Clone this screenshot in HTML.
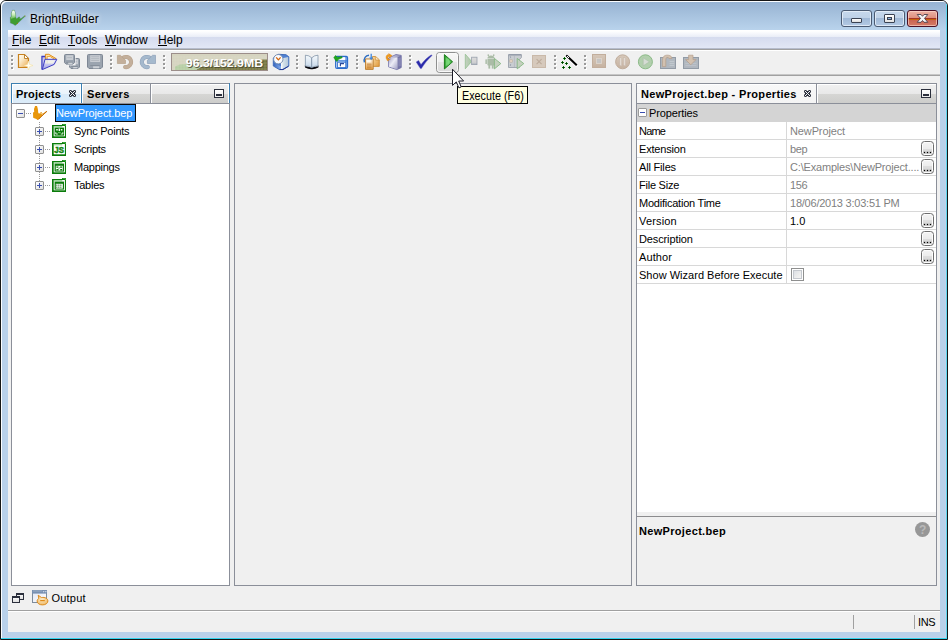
<!DOCTYPE html>
<html>
<head>
<meta charset="utf-8">
<title>BrightBuilder</title>
<style>
html,body{margin:0;padding:0;}
body{width:948px;height:640px;overflow:hidden;position:relative;background:#ffffff;font-family:"Liberation Sans",sans-serif;font-size:11px;color:#000;}
.a{position:absolute;}
.t{position:absolute;white-space:nowrap;line-height:1;}
/* window frame */
#frame{left:0;top:0;width:946px;height:638px;border:1px solid #161616;border-radius:6px 6px 0 0;background:linear-gradient(#97b3d2 0px,#97b3d2 1px,#b9d3ec 29px,#b9d1ea 30px);}
#titlegrad{display:none;}
#client{left:8px;top:30px;width:932px;height:602px;background:#f0f0f0;}
/* menu */
#menubar{left:8px;top:30px;width:932px;height:18px;background:linear-gradient(#ffffff 0px,#ffffff 1px,#e9edf7 7px,#d5dbee 7px,#e2e7f5 18px);}
.menu{font-size:12px;top:34px;}
.menu u{text-decoration:none;display:inline-block;height:12px;background:linear-gradient(#000,#000) no-repeat 0 11px / 100% 1px;}
/* panels */
.tabtxt{font-weight:bold;font-size:11px;}
.grip i{position:absolute;left:0;width:2px;height:2px;background:#a0a0a0;box-shadow:1px 1px 0 #fff;}

.xb{width:7px;height:7px;border:1px solid #919191;background:linear-gradient(135deg,#fff,#e0e0e0);border-radius:1px;}
.xb .h{position:absolute;left:1px;top:3px;width:5px;height:1px;background:#3a4fb0;}
.xb .v{position:absolute;left:3px;top:1px;width:1px;height:5px;background:#3a4fb0;}
.prow{position:absolute;left:637px;width:299px;height:1px;background:#d8d8d8;}
.pn{position:absolute;white-space:nowrap;line-height:1;left:639px;font-size:11px;}
.pv{position:absolute;white-space:nowrap;line-height:1;left:790px;font-size:11px;color:#7f7f7f;}
.eb{position:absolute;left:921px;width:11px;height:13px;border:1px solid #6e6e6e;border-radius:3.5px;background:linear-gradient(#f4f4f4,#ececec 50%,#dedede 50%,#d0d0d0);box-shadow:inset 0 0 0 1px #fcfcfc;}
.eb i{position:absolute;top:10px;width:1px;height:1px;background:#000;box-shadow:0 0 0 0.3px rgba(0,0,0,0.5);}

.wb{width:29px;height:15px;border:1px solid #4a5a72;border-radius:3px;background:linear-gradient(#c6d8ec 0,#bfd2e8 7px,#9fb8d6 7px,#b4cae4 15px);box-shadow:inset 0 0 0 1px rgba(232,241,250,0.8);}
.wc{border-color:#4c1024;background:linear-gradient(#ecb2a4 0,#de907e 7px,#a63424 7px,#a63424 8px,#c4640c 8px,#c4640c 9px,#ca6452 9px,#d47a66 15px);box-shadow:inset 0 0 0 1px rgba(255,222,212,0.6);}
</style>
</head>
<body>
<div class="a" id="frame"></div>
<div class="a" id="titlegrad"></div>
<!-- outer borders -->
<div class="a" style="left:1px;top:1px;width:946px;height:637px;border-radius:5px 5px 0 0;box-shadow:inset 1px 1px 0 #fbfdff;"></div>
<div class="a" style="left:946px;top:4px;width:1px;height:635px;background:#5fd8f0"></div>
<div class="a" style="left:1px;top:638px;width:946px;height:1px;background:#30d4ee"></div>
<div class="a" style="left:2px;top:637px;width:944px;height:1px;background:#c6d0e8"></div>
<div class="a" style="left:945px;top:30px;width:1px;height:607px;background:#c2d2ea"></div>
<div class="t" id="title" style="left:30px;top:13px;font-size:12px;text-shadow:0 0 5px rgba(255,255,255,0.9),0 0 8px rgba(255,255,255,0.6);">BrightBuilder</div>


<!-- app icon -->
<svg class="a" style="left:9px;top:9px" width="18" height="18" viewBox="0 0 16.36 16.36"><defs><linearGradient id="gThumb" x1="0" y1="0" x2="0" y2="1"><stop offset="0" stop-color="#ffffff"/><stop offset="0.5" stop-color="#c4ecb4"/><stop offset="1" stop-color="#52aa40"/></linearGradient></defs>
<path d="M3,1 L5,1 L5.6,3 L6,5 L6.2,7.5 L7,8.8 L8,8 L9,7 L10,7.4 L9.6,8.6 L11,8.6 L14.4,6 L15,6.4 L12,9.2 L9,12 L6.4,14.6 L5.4,15 L4.4,14 L3,13.4 L1.2,12.8 L1,7.4 L2.2,7 L2,4 L2.6,2.6 Z" fill="#3f9d30" stroke="#5c7c8c" stroke-width="0.5" stroke-opacity="0.55"/>
<path d="M3.1,1.3 L4.9,1.3 L5.4,3 L5.8,5 L6,7.6 L1.6,9.4 L1.4,7.6 L2.5,7.1 L2.3,4 L2.8,2.7 Z" fill="url(#gThumb)"/>
<rect x="7.2" y="12.6" width="0.9" height="0.9" fill="#b86a10"/><rect x="14" y="6" width="0.9" height="0.9" fill="#c8a040" opacity="0.8"/></svg>
<!-- window buttons -->
<div class="a wb" style="left:841px;top:10px;"></div>
<div class="a wb" style="left:874px;top:10px;"></div>
<div class="a wb wc" style="left:907px;top:10px;"></div>
<div class="a" style="left:851px;top:18px;width:9px;height:3px;border:1px solid #3a4252;border-radius:1px;background:linear-gradient(#ffffff,#dcdcdc)"></div>
<div class="a" style="left:884px;top:14px;width:9px;height:7px;border:1px solid #3a4252;border-radius:1px;background:linear-gradient(#ffffff,#e2e2e2)"></div>
<div class="a" style="left:887px;top:17px;width:3px;height:1px;border:1px solid #3a4252;background:#8eb4e0"></div>
<svg class="a" style="left:915px;top:12px" width="15" height="12" viewBox="915 12 15 12"><path d="M917.2,14.5 H921 L922.5,16.3 L924,14.5 H927.8 L924.5,18.4 L927.8,22.3 H924 L922.5,20.5 L921,22.3 H917.2 L920.5,18.4 Z" fill="#f6f6f6" stroke="#4a3e4c" stroke-width="0.9" stroke-linejoin="round"/></svg>
<div class="a" id="client"></div>
<div class="a" id="menubar"></div>
<div class="a" style="left:8px;top:48px;width:932px;height:1px;background:#b6bccc"></div>
<div class="a" style="left:8px;top:49px;width:932px;height:1px;background:#a0a0a0"></div>
<div class="a" style="left:8px;top:50px;width:932px;height:1px;background:#ffffff"></div>
<div class="a" style="left:8px;top:74px;width:932px;height:1px;background:#c6c6c6"></div>
<div class="a" style="left:8px;top:75px;width:932px;height:1px;background:#a0a0a0"></div>

<div class="t menu" id="m1" style="left:12px"><u>F</u>ile</div>
<div class="t menu" id="m2" style="left:39px"><u>E</u>dit</div>
<div class="t menu" id="m3" style="left:68px"><u>T</u>ools</div>
<div class="t menu" id="m4" style="left:105px"><u>W</u>indow</div>
<div class="t menu" id="m5" style="left:158px"><u>H</u>elp</div>

<svg class="a" id="tbsvg" style="left:0;top:0" width="948" height="110" viewBox="0 0 948 110">
<defs>
<linearGradient id="gNew" x1="0" y1="0" x2="1" y2="1"><stop offset="0" stop-color="#ffffff"/><stop offset="0.35" stop-color="#fbeccc"/><stop offset="0.7" stop-color="#f2c888"/><stop offset="1" stop-color="#f09a34"/></linearGradient>
<linearGradient id="gFold" x1="0" y1="0" x2="0" y2="1"><stop offset="0" stop-color="#e8e8fa"/><stop offset="1" stop-color="#a4a4e4"/></linearGradient>
<linearGradient id="gBook" x1="0" y1="0" x2="0" y2="1"><stop offset="0" stop-color="#f6fafd"/><stop offset="1" stop-color="#c4d6e8"/></linearGradient>
<linearGradient id="gBtn" x1="0" y1="0" x2="0" y2="1"><stop offset="0" stop-color="#f7f7f7"/><stop offset="0.48" stop-color="#f0f0f0"/><stop offset="0.5" stop-color="#e3e3e3"/><stop offset="1" stop-color="#dadada"/></linearGradient>
<linearGradient id="gPlay" x1="0" y1="0" x2="1" y2="0"><stop offset="0" stop-color="#158a15"/><stop offset="0.5" stop-color="#6fd06f"/><stop offset="1" stop-color="#2a9a2a"/></linearGradient>
<linearGradient id="gSrv" x1="0" y1="0" x2="1" y2="0"><stop offset="0" stop-color="#dcdcec"/><stop offset="1" stop-color="#8c8cb4"/></linearGradient>
<linearGradient id="gSrvF" x1="0" y1="0" x2="1" y2="1"><stop offset="0" stop-color="#a4a4c8"/><stop offset="0.45" stop-color="#ececf6"/><stop offset="1" stop-color="#a0a0c4"/></linearGradient>
<linearGradient id="gPaste2" x1="0" y1="0" x2="0" y2="1"><stop offset="0" stop-color="#fdf0dc"/><stop offset="1" stop-color="#e8a044"/></linearGradient>
<linearGradient id="gGcR" x1="0" y1="0" x2="1" y2="0"><stop offset="0" stop-color="#ffffff"/><stop offset="0.35" stop-color="#d4e0e8"/><stop offset="1" stop-color="#b4c8dc"/></linearGradient>
<linearGradient id="gGcL" x1="0" y1="0" x2="1" y2="0"><stop offset="0" stop-color="#3a68c0"/><stop offset="1" stop-color="#8ab0ec"/></linearGradient>
<linearGradient id="gTan" x1="0" y1="0" x2="0" y2="1"><stop offset="0" stop-color="#d6c8ba"/><stop offset="1" stop-color="#c6b2a0"/></linearGradient>
<linearGradient id="gDisTri" x1="0" y1="0" x2="1" y2="0"><stop offset="0" stop-color="#c4d0c0"/><stop offset="1" stop-color="#a8c8a4"/></linearGradient>
<linearGradient id="gDisSq" x1="0" y1="0" x2="0" y2="1"><stop offset="0" stop-color="#dcdcdc"/><stop offset="0.7" stop-color="#d0d0d2"/><stop offset="1" stop-color="#a8b0bc"/></linearGradient>
<linearGradient id="gGc" x1="0" y1="0" x2="1" y2="1"><stop offset="0" stop-color="#e4eefa"/><stop offset="0.6" stop-color="#8ab0e0"/><stop offset="1" stop-color="#3c6cb4"/></linearGradient>
<linearGradient id="gPaste" x1="0" y1="0" x2="1" y2="1"><stop offset="0" stop-color="#f8dca8"/><stop offset="1" stop-color="#e09838"/></linearGradient>
</defs>
<g id="grips">
<rect x="12" y="56" width="2" height="2" fill="#ffffff"/><rect x="11" y="55" width="2" height="2" fill="#9a9a9a"/><rect x="12" y="60" width="2" height="2" fill="#ffffff"/><rect x="11" y="59" width="2" height="2" fill="#9a9a9a"/><rect x="12" y="64" width="2" height="2" fill="#ffffff"/><rect x="11" y="63" width="2" height="2" fill="#9a9a9a"/><rect x="12" y="68" width="2" height="2" fill="#ffffff"/><rect x="11" y="67" width="2" height="2" fill="#9a9a9a"/>
<rect x="111" y="56" width="2" height="2" fill="#ffffff"/><rect x="110" y="55" width="2" height="2" fill="#9a9a9a"/><rect x="111" y="60" width="2" height="2" fill="#ffffff"/><rect x="110" y="59" width="2" height="2" fill="#9a9a9a"/><rect x="111" y="64" width="2" height="2" fill="#ffffff"/><rect x="110" y="63" width="2" height="2" fill="#9a9a9a"/><rect x="111" y="68" width="2" height="2" fill="#ffffff"/><rect x="110" y="67" width="2" height="2" fill="#9a9a9a"/>
<rect x="164" y="56" width="2" height="2" fill="#ffffff"/><rect x="163" y="55" width="2" height="2" fill="#9a9a9a"/><rect x="164" y="60" width="2" height="2" fill="#ffffff"/><rect x="163" y="59" width="2" height="2" fill="#9a9a9a"/><rect x="164" y="64" width="2" height="2" fill="#ffffff"/><rect x="163" y="63" width="2" height="2" fill="#9a9a9a"/><rect x="164" y="68" width="2" height="2" fill="#ffffff"/><rect x="163" y="67" width="2" height="2" fill="#9a9a9a"/>
<rect x="297" y="56" width="2" height="2" fill="#ffffff"/><rect x="296" y="55" width="2" height="2" fill="#9a9a9a"/><rect x="297" y="60" width="2" height="2" fill="#ffffff"/><rect x="296" y="59" width="2" height="2" fill="#9a9a9a"/><rect x="297" y="64" width="2" height="2" fill="#ffffff"/><rect x="296" y="63" width="2" height="2" fill="#9a9a9a"/><rect x="297" y="68" width="2" height="2" fill="#ffffff"/><rect x="296" y="67" width="2" height="2" fill="#9a9a9a"/>
<rect x="327" y="56" width="2" height="2" fill="#ffffff"/><rect x="326" y="55" width="2" height="2" fill="#9a9a9a"/><rect x="327" y="60" width="2" height="2" fill="#ffffff"/><rect x="326" y="59" width="2" height="2" fill="#9a9a9a"/><rect x="327" y="64" width="2" height="2" fill="#ffffff"/><rect x="326" y="63" width="2" height="2" fill="#9a9a9a"/><rect x="327" y="68" width="2" height="2" fill="#ffffff"/><rect x="326" y="67" width="2" height="2" fill="#9a9a9a"/>
<rect x="357" y="56" width="2" height="2" fill="#ffffff"/><rect x="356" y="55" width="2" height="2" fill="#9a9a9a"/><rect x="357" y="60" width="2" height="2" fill="#ffffff"/><rect x="356" y="59" width="2" height="2" fill="#9a9a9a"/><rect x="357" y="64" width="2" height="2" fill="#ffffff"/><rect x="356" y="63" width="2" height="2" fill="#9a9a9a"/><rect x="357" y="68" width="2" height="2" fill="#ffffff"/><rect x="356" y="67" width="2" height="2" fill="#9a9a9a"/>
<rect x="410" y="56" width="2" height="2" fill="#ffffff"/><rect x="409" y="55" width="2" height="2" fill="#9a9a9a"/><rect x="410" y="60" width="2" height="2" fill="#ffffff"/><rect x="409" y="59" width="2" height="2" fill="#9a9a9a"/><rect x="410" y="64" width="2" height="2" fill="#ffffff"/><rect x="409" y="63" width="2" height="2" fill="#9a9a9a"/><rect x="410" y="68" width="2" height="2" fill="#ffffff"/><rect x="409" y="67" width="2" height="2" fill="#9a9a9a"/>
<rect x="555" y="56" width="2" height="2" fill="#ffffff"/><rect x="554" y="55" width="2" height="2" fill="#9a9a9a"/><rect x="555" y="60" width="2" height="2" fill="#ffffff"/><rect x="554" y="59" width="2" height="2" fill="#9a9a9a"/><rect x="555" y="64" width="2" height="2" fill="#ffffff"/><rect x="554" y="63" width="2" height="2" fill="#9a9a9a"/><rect x="555" y="68" width="2" height="2" fill="#ffffff"/><rect x="554" y="67" width="2" height="2" fill="#9a9a9a"/>
<rect x="585" y="56" width="2" height="2" fill="#ffffff"/><rect x="584" y="55" width="2" height="2" fill="#9a9a9a"/><rect x="585" y="60" width="2" height="2" fill="#ffffff"/><rect x="584" y="59" width="2" height="2" fill="#9a9a9a"/><rect x="585" y="64" width="2" height="2" fill="#ffffff"/><rect x="584" y="63" width="2" height="2" fill="#9a9a9a"/><rect x="585" y="68" width="2" height="2" fill="#ffffff"/><rect x="584" y="67" width="2" height="2" fill="#9a9a9a"/>
</g>
<g id="icNew"><path d="M18.5,54.5 H24.5 L28.5,58.5 V67.5 H18.5 Z" fill="url(#gNew)" stroke="#c8811c" stroke-width="1.2"/><path d="M24.5,54.5 V58.5 H28.5 Z" fill="#ffffff" stroke="#b97a20" stroke-width="0.9"/><path d="M28.5,61 L29.6,64.4 L33,65.5 L29.6,66.6 L28.5,70 L27.4,66.6 L24,65.5 L27.4,64.4 Z" fill="#fffef6" stroke="#f4e2a4" stroke-width="0.6"/></g>
<g id="icOpen"><path d="M42.4,57 H45.2 V60 L42.8,68.6 Z" fill="#c4c4ee"/><path d="M45.4,59.2 V54.3 H48.8 L56,58.6 V59.2" fill="#fbdfa8" stroke="#e08c14" stroke-width="1"/><path d="M47.1,59.2 V56.6 H50.2 L54.2,59" fill="#fffdf6" stroke="#e8981c" stroke-width="0.9"/><path d="M41.4,56.5 H45.2 M41.95,56 V69.6" stroke="#3c3cc2" stroke-width="1.3" fill="none"/><path d="M45,59.3 H56.8 L54.2,64.4 L42.3,69.6 Z" fill="url(#gFold)" stroke="#3c3cc2" stroke-width="1" stroke-linejoin="round"/><path d="M45.6,60.4 H54.6 L53.2,63.6 H45.2 Z" fill="#f1f1e8" opacity="0.95"/><path d="M47.2,60.4 V63.6" stroke="#d8d4b8" stroke-width="0.5"/></g>
<g id="icSaveAll"><path d="M69.5,59.5 Q69.5,58.5 70.5,58.5 H78.5 Q79.5,58.5 79.5,59.5 V67.0 L78.0,68.5 H71.0 L69.5,67.0 Z" fill="#9ba4af" stroke="#7f8895" stroke-width="1"/><rect x="71.2" y="59.2" width="6.8" height="5.0" fill="#c9cdd3"/><path d="M72.2,61.7 h4.8" stroke="#aab0b8" stroke-width="0.7"/><rect x="71.2" y="66.1" width="6.6" height="1" fill="#858e9a"/><rect x="73.2" y="67.0" width="4.2" height="1.4" fill="#cfd3d8"/><rect x="63.4" y="53.4" width="12.2" height="12" fill="#f0f0f0"/><path d="M64.5,55.5 Q64.5,54.5 65.5,54.5 H73.5 Q74.5,54.5 74.5,55.5 V62.599999999999994 L73.0,64.1 H66.0 L64.5,62.599999999999994 Z" fill="#9ba4af" stroke="#7f8895" stroke-width="1"/><rect x="66.2" y="55.2" width="6.8" height="4.8" fill="#c9cdd3"/><path d="M67.2,57.6 h4.8" stroke="#aab0b8" stroke-width="0.7"/><rect x="66.2" y="61.8" width="6.6" height="1" fill="#858e9a"/><rect x="68.2" y="62.7" width="4.2" height="1.4" fill="#cfd3d8"/></g>
<g id="icSave"><path d="M87.5,55.5 Q87.5,54.5 88.5,54.5 H101.5 Q102.5,54.5 102.5,55.5 V67.0 L101.0,68.5 H89.0 L87.5,67.0 Z" fill="#9ba4af" stroke="#7f8895" stroke-width="1"/><rect x="90.2" y="55.2" width="9.9" height="6.8" fill="#c9cdd3"/><path d="M91.2,56.7 h7.9" stroke="#aab0b8" stroke-width="0.7"/><path d="M91.2,58.6 h7.9" stroke="#aab0b8" stroke-width="0.7"/><path d="M91.2,60.5 h7.9" stroke="#aab0b8" stroke-width="0.7"/><rect x="90.2" y="65.1" width="9.6" height="1" fill="#858e9a"/><rect x="93.1" y="66.3" width="6.1" height="2.0" fill="#cfd3d8"/></g>
<g id="icUndo"><path d="M122.1,58.7 A5.1,5.1 0 1 1 125.1,67.05" fill="none" stroke="#b5a08a" stroke-width="4" stroke-linecap="round"/><path d="M122.1,58.7 A5.1,5.1 0 1 1 125.1,67.05" fill="none" stroke="#c3af9b" stroke-width="3" stroke-linecap="round"/><path d="M117.4,55.3 L120.4,55.3 L125.5,60.3 L125.5,63.5 L117.4,63.5 Z" fill="#c3af9b" stroke="#b5a08a" stroke-width="0.7" stroke-linejoin="round"/></g>
<g id="icRedo" transform="translate(272.9,0) scale(-1,1)"><path d="M122.1,58.7 A5.1,5.1 0 1 1 125.1,67.05" fill="none" stroke="#8c9fb8" stroke-width="4" stroke-linecap="round"/><path d="M122.1,58.7 A5.1,5.1 0 1 1 125.1,67.05" fill="none" stroke="#a5b9cd" stroke-width="3" stroke-linecap="round"/><path d="M117.4,55.3 L120.4,55.3 L125.5,60.3 L125.5,63.5 L117.4,63.5 Z" fill="#a5b9cd" stroke="#8c9fb8" stroke-width="0.7" stroke-linejoin="round"/></g>
<g id="icMem"><rect x="171.5" y="53.5" width="96" height="17" fill="#d6d4c0" stroke="#9c8e8a"/>
<path d="M196,70 L200,67.4 L206,65.8 L236,65 L248,63.4 L254,61 L260,59.6 L267,59.4 L267,70 Z" fill="#6e6e36"/>
<path d="M175,70 L175,66.4 L180,64.6 L190,64 L198,65.4 L200,67.6 L196,70 Z" fill="#a8cc98" opacity="0.75"/>
<g stroke="#e6e5d6" stroke-width="0.6" opacity="0.35"><path d="M175,56 V70 M178,56 V70 M181,56 V70 M184,56 V70 M187,56 V70 M190,56 V70 M193,56 V70 M196,56 V70 M199,56 V70 M202,56 V70 M205,56 V70 M208,56 V70 M211,56 V70 M214,56 V70 M217,56 V70 M220,56 V70 M223,56 V70 M226,56 V70 M229,56 V70 M232,56 V70 M235,56 V70 M238,56 V70 M241,56 V70 M244,56 V70 M247,56 V70 M250,56 V70 M253,56 V70 M256,56 V70 M259,56 V70 M262,56 V70 M265,56 V70"/><path d="M172,57 H267 M172,60 H267 M172,63 H267 M172,66 H267 M172,69 H267"/></g>
<g transform="translate(185.8,66.8) scale(1.12,1)"><text x="0.8" y="0.8" font-family="Liberation Sans" font-weight="bold" font-size="11" fill="#4a4a34" opacity="0.85">96.3/152.9MB</text><text x="0" y="0" font-family="Liberation Sans" font-weight="bold" font-size="11" fill="#ffffff">96.3/152.9MB</text></g></g>
<g id="icGc"><path d="M273.3,58 L278.6,54.3 L286,54.7 L288.8,56.8 L288.8,66 L283,69.6 L279.4,69.6 L273.3,66 Z" fill="#4f80d2" stroke="#3865b6" stroke-width="0.9" stroke-linejoin="round"/><path d="M281,58.6 L288.2,57 L288.2,65.7 L282.6,69 L281,69 Z" fill="url(#gGcR)"/><path d="M273.8,62.4 L281,66.4 L281,69 L279.6,69 L273.8,65.7 Z" fill="url(#gGcL)"/><path d="M279.6,69.5 H283 L288.6,66.2" stroke="#20308c" stroke-width="0.9" fill="none"/><circle cx="278.3" cy="59.2" r="4.7" fill="#fbfbfd" stroke="#6c86aa" stroke-width="0.9"/><path d="M276.2,57.3 L278.4,59.9 L280.6,57.4" fill="none" stroke="#d2640c" stroke-width="1.3" stroke-linejoin="round"/></g>
<g id="icBook"><path d="M304.8,65.6 Q308,67.4 311.7,67.2 Q315.4,67.4 318.6,65.6 L318.4,67.4 Q315,69.4 311.7,69.2 Q308.4,69.4 305,67.4 Z" fill="#08080f"/><path d="M305.4,55.2 Q309,55.2 311.7,57.8 L311.7,67.6 Q308.4,65.6 305.4,66.2 Z" fill="url(#gBook)" stroke="#72869e" stroke-width="0.7"/><path d="M318,55.2 Q314.4,55.2 311.7,57.8 L311.7,67.6 Q315,65.6 318,66.2 Z" fill="url(#gBook)" stroke="#72869e" stroke-width="0.7"/></g>
<g id="icSaveB"><rect x="335.7" y="56.5" width="11.8" height="11.8" rx="1.2" fill="#eef4fc" stroke="#2c6ccc" stroke-width="1.3"/><path d="M336.4,60.8 H347 M346,57 V68" stroke="#3c7cd8" stroke-width="1.3"/><rect x="339.6" y="57.4" width="5.6" height="2.2" fill="#ffffff"/><rect x="337.6" y="62.2" width="8.2" height="5.4" fill="#ffffff" stroke="#2c6ccc" stroke-width="0.9"/><path d="M340.4,66.2 V63.6 H344" fill="none" stroke="#2a4a9c" stroke-width="1.2"/><path d="M333.8,57.6 L335.6,55.4 L337.4,57.2 L342,56.6 L342.2,57.8 L338,59.6 L337.2,61.4 L335.6,60.4 Z" fill="#1fa81f" stroke="#158415" stroke-width="0.5"/></g>
<g id="icPaste"><path d="M372.5,56.5 H375.6 L379.3,59.8 V66.4 H372.5 Z" fill="url(#gPaste)" stroke="#c8862c" stroke-width="0.8"/><path d="M375.4,56.8 V60 H379" fill="#fbe6c4" stroke="#c8862c" stroke-width="0.6"/><path d="M365.5,58.9 H373.2 V69.4 H365.5 Z" fill="url(#gPaste2)" stroke="#b87a2c" stroke-width="0.9"/><rect x="366.6" y="60" width="4" height="2.4" fill="#fffaf0"/><path d="M367,64.2 h4.6 M367,66 h4.6 M367,67.8 h4.6" stroke="#b4742c" stroke-width="0.7"/><path d="M364.4,62.4 C363.4,58 365.6,55.6 369,55.2" fill="none" stroke="#2c6cc0" stroke-width="1.4"/><path d="M371.2,53.8 V59" stroke="#3f86dc" stroke-width="1.3"/><path d="M369.2,57.6 L371.2,60.2 L373.2,57.6 Z" fill="#3f86dc"/></g>
<g id="icSrv"><path d="M388.5,58 L396,54.5 L401.2,55.4 L401.2,67.6 L396.8,69.6 L388.5,66.8 Z" fill="url(#gSrv)" stroke="#6c6ca4" stroke-width="0.8" stroke-linejoin="round"/><path d="M397.6,57.2 L401.2,55.4 L401.2,67.6 L397.6,69.4 Z" fill="#7474a6"/><path d="M388.9,58.2 L397.4,57.4 L397.4,69.2 L388.9,66.6 Z" fill="url(#gSrvF)"/><path d="M399,58 V66.5 M400.2,57.6 V66" stroke="#a4a4c8" stroke-width="0.5"/><path d="M386.2,58.4 C385.6,56.2 386.6,54.4 389,54.4 L388.6,53.6 L392,55.6 L389.6,58 L389.4,56.6 C388.2,56.4 387.6,57.2 388.2,59 L390.4,59 L387.6,61 Z" fill="#f09a1c" stroke="#d47c0c" stroke-width="0.4"/></g>
<g id="icChk"><path d="M416.2,62 L418.6,60.4 L421,64.6 C424,60.6 427.6,57.2 431.4,54.8 L432,55.6 C428,59.4 424.4,63.6 421.4,68.6 L420.4,68.6 Z" fill="#2a2aaa" stroke="#5858c0" stroke-width="0.4"/></g>
<g id="icPlay"><rect x="436.5" y="52.5" width="22" height="20" rx="3" fill="url(#gBtn)" stroke="#8e8f8f"/><rect x="437.5" y="53.5" width="20" height="18" rx="2" fill="none" stroke="#fbfbfb" opacity="0.9"/><path d="M444.4,54.6 L452.6,61.8 L444.4,69 Z" fill="url(#gPlay)" stroke="#157a15" stroke-width="0.9" stroke-linejoin="round"/><path d="M445.6,57.2 L450.6,61.8 L445.6,66.4 Z" fill="#7fdc7f" opacity="0.75"/></g>
<g id="icPlayStop"><path d="M465.3,54.2 L471.6,61.4 L465.3,68.8 Z" fill="url(#gDisTri)" stroke="#8cbc8a" stroke-width="0.7" stroke-linejoin="round"/><rect x="471.6" y="57.2" width="5.4" height="7.4" fill="url(#gDisSq)" stroke="#98a0ac" stroke-width="0.8"/></g>
<g id="icAndroid" fill="#abbca7"><path d="M487.4,58.4 Q487.6,55.8 491,55.6 Q494.4,55.8 494.6,58.4 Z"/><rect x="487.6" y="54.4" width="1.4" height="1.6"/><rect x="493" y="54.4" width="1.4" height="1.6"/><rect x="487.4" y="59" width="7.2" height="6.4" rx="0.6"/><rect x="485.4" y="59.2" width="1.5" height="4.8" rx="0.6"/><rect x="488.4" y="64.8" width="1.8" height="3.8"/><rect x="491.8" y="64.8" width="1.8" height="3.8"/><path d="M494.4,58.4 L500.8,63.6 L494.4,68.9 Z" fill="#c4d0be" stroke="#7cb47a" stroke-width="0.8" stroke-linejoin="round"/></g>
<g id="icList"><path d="M508.5,54.8 H521.4 V57.6 L519.4,59.4 V67.5 H508.5 Z" fill="#c9cdd1" stroke="#9aa2ac" stroke-width="0.9"/><path d="M508.5,54.8 H521.4" stroke="#8890a0" stroke-width="1"/><path d="M510,56.2 q1.6,0.8 0,2 M510,64 q1.6,0.8 0,2" stroke="#8890a0" stroke-width="0.7" fill="none"/><rect x="509.8" y="59.8" width="2.6" height="2.4" fill="#e4d4c4" stroke="#b8a898" stroke-width="0.5"/><path d="M514.4,55.4 V67" stroke="#aab0b8" stroke-width="0.6"/><path d="M517.2,58.4 L523.8,63.6 L517.2,68.9 Z" fill="#c4d0be" stroke="#7cb47a" stroke-width="0.8" stroke-linejoin="round"/></g>
<g id="icX"><rect x="532.5" y="55.5" width="13" height="12" fill="#d6c9bc" stroke="#c9b9a9"/><path d="M536.6,59.2 L541.6,64.2 M541.6,59.2 L536.6,64.2" stroke="#bcab9b" stroke-width="1.1"/></g>
<g id="icWand"><path d="M566.6,55.6 L576.4,65" stroke="#ffffff" stroke-width="3.6" stroke-linecap="round" opacity="0.9"/><path d="M567,56 L576,64.6" stroke="#000000" stroke-width="2.1" stroke-linecap="square"/><rect x="567" y="56" width="1" height="1" fill="#fff"/><rect x="568" y="57" width="1" height="1" fill="#fff"/><g shape-rendering="crispEdges"><rect x="563" y="58" width="3" height="1" fill="#0d7a0d"/><rect x="564" y="57" width="1" height="3" fill="#0d7a0d"/><rect x="564" y="58" width="1" height="1" fill="#001800"/><rect x="561" y="62" width="3" height="1" fill="#0d7a0d"/><rect x="562" y="61" width="1" height="3" fill="#0d7a0d"/><rect x="562" y="62" width="1" height="1" fill="#001800"/><rect x="565" y="63" width="3" height="1" fill="#0d7a0d"/><rect x="566" y="62" width="1" height="3" fill="#0d7a0d"/><rect x="566" y="63" width="1" height="1" fill="#001800"/><rect x="562" y="67" width="3" height="1" fill="#0d7a0d"/><rect x="563" y="66" width="1" height="3" fill="#0d7a0d"/><rect x="563" y="67" width="1" height="1" fill="#001800"/><rect x="568" y="67" width="3" height="1" fill="#0d7a0d"/><rect x="569" y="66" width="1" height="3" fill="#0d7a0d"/><rect x="569" y="67" width="1" height="1" fill="#001800"/></g></g>
<g id="icStop"><rect x="592.5" y="54.5" width="13" height="13" fill="url(#gTan)" stroke="#c2ae9c"/><rect x="596.5" y="58.5" width="5" height="5" fill="#c6c4c2" stroke="#ddd4cc" stroke-width="0.9"/></g>
<g id="icPause"><circle cx="622.6" cy="61.8" r="7" fill="url(#gTan)" stroke="#bca896" stroke-width="0.9"/><rect x="619.6" y="57.8" width="2.2" height="8" fill="#e2dad2" stroke="#c0b0a2" stroke-width="0.4"/><rect x="623.4" y="57.8" width="2.2" height="8" fill="#e2dad2" stroke="#c0b0a2" stroke-width="0.4"/></g>
<g id="icResume"><circle cx="645.4" cy="61.8" r="7" fill="#b2cfad" stroke="#8cba88" stroke-width="1"/><path d="M643.2,57.8 L649.4,61.8 L643.2,65.8 Z" fill="#d6dcd4" stroke="#a8c0a6" stroke-width="0.6" stroke-linejoin="round"/></g>
<g id="icStepOut"><rect x="660.5" y="57.5" width="15" height="11" fill="#b0b7bf" stroke="#929ba6"/><path d="M669.6,61.4 h4.6 M669.6,63.4 h4.6 M669.6,65.4 h4.6" stroke="#cdd2d7" stroke-width="0.7"/><path d="M662.4,66.6 L662.4,60.6 C662.4,56.6 664.6,54.8 668.2,55.2 C670.6,55.4 671.8,56.6 672,58.4 L669,58.6 C668.8,57.8 668.2,57.6 667.4,57.6 C666.2,57.6 665.8,58.4 665.8,59.8 L665.8,66.6 Z" fill="#d2c1b0" stroke="#b49e8a" stroke-width="0.7" stroke-linejoin="round"/></g>
<g id="icStepIn"><rect x="683.5" y="57.5" width="15" height="11" fill="#b0b7bf" stroke="#929ba6"/><path d="M685.4,63.4 h11 M685.4,65.6 h11" stroke="#c4c9cf" stroke-width="0.7"/><path d="M688.6,55.2 H693 V59.6 H696 L690.8,64.8 L685.6,59.6 H688.6 Z" fill="#d2c1b0" stroke="#b49e8a" stroke-width="0.7" stroke-linejoin="round"/></g>
</svg>



<!-- LEFT PANEL -->
<div class="a" style="left:11px;top:83px;width:219px;height:503px;background:#8b8f99"></div>
<div class="a" style="left:12px;top:104px;width:217px;height:481px;background:#ffffff"></div>
<!-- tab row background (unselected area) -->
<div class="a" style="left:12px;top:84px;width:217px;height:19px;background:linear-gradient(#ffffff 0,#ffffff 1px,#f0f0f0 1px,#e8e8e8 10px,#d6d6d4 10px,#cdcdcb 19px)"></div>
<!-- selected tab Projects -->
<div class="a" style="left:11px;top:83px;width:71px;height:20px;background:#3c7fb1"></div>
<div class="a" style="left:12px;top:84px;width:69px;height:19px;background:linear-gradient(#ffffff 0,#ffffff 1px,#f0f6fc 1px,#eaf3fb 10px,#d9eaf8 10px,#dcecf9 19px);box-shadow:inset 1px 0 0 #fff,inset -1px 0 0 #fff"></div>
<div class="t tabtxt" id="tProjects" style="left:16px;top:89px;letter-spacing:0.22px;">Projects</div>
<svg class="a" style="left:69px;top:90px" width="7" height="7" viewBox="0 0 7 7" shape-rendering="crispEdges"><rect x="0" y="0" width="1" height="1" fill="#2b2f3c" opacity="0.6"/><rect x="1" y="0" width="1" height="1" fill="#2b2f3c"/><rect x="2" y="0" width="1" height="1" fill="#2b2f3c" opacity="0.6"/><rect x="4" y="0" width="1" height="1" fill="#2b2f3c" opacity="0.6"/><rect x="5" y="0" width="1" height="1" fill="#2b2f3c"/><rect x="6" y="0" width="1" height="1" fill="#2b2f3c" opacity="0.6"/><rect x="0" y="1" width="1" height="1" fill="#2b2f3c"/><rect x="1" y="1" width="1" height="1" fill="#f4f6f8"/><rect x="2" y="1" width="1" height="1" fill="#2b2f3c"/><rect x="3" y="1" width="1" height="1" fill="#2b2f3c"/><rect x="4" y="1" width="1" height="1" fill="#2b2f3c"/><rect x="5" y="1" width="1" height="1" fill="#f4f6f8"/><rect x="6" y="1" width="1" height="1" fill="#2b2f3c"/><rect x="0" y="2" width="1" height="1" fill="#2b2f3c" opacity="0.6"/><rect x="1" y="2" width="1" height="1" fill="#2b2f3c"/><rect x="2" y="2" width="1" height="1" fill="#f4f6f8"/><rect x="3" y="2" width="1" height="1" fill="#2b2f3c"/><rect x="4" y="2" width="1" height="1" fill="#f4f6f8"/><rect x="5" y="2" width="1" height="1" fill="#2b2f3c"/><rect x="6" y="2" width="1" height="1" fill="#2b2f3c" opacity="0.6"/><rect x="1" y="3" width="1" height="1" fill="#2b2f3c"/><rect x="2" y="3" width="1" height="1" fill="#2b2f3c"/><rect x="3" y="3" width="1" height="1" fill="#f4f6f8"/><rect x="4" y="3" width="1" height="1" fill="#2b2f3c"/><rect x="5" y="3" width="1" height="1" fill="#2b2f3c"/><rect x="0" y="4" width="1" height="1" fill="#2b2f3c" opacity="0.6"/><rect x="1" y="4" width="1" height="1" fill="#2b2f3c"/><rect x="2" y="4" width="1" height="1" fill="#f4f6f8"/><rect x="3" y="4" width="1" height="1" fill="#2b2f3c"/><rect x="4" y="4" width="1" height="1" fill="#f4f6f8"/><rect x="5" y="4" width="1" height="1" fill="#2b2f3c"/><rect x="6" y="4" width="1" height="1" fill="#2b2f3c" opacity="0.6"/><rect x="0" y="5" width="1" height="1" fill="#2b2f3c"/><rect x="1" y="5" width="1" height="1" fill="#f4f6f8"/><rect x="2" y="5" width="1" height="1" fill="#2b2f3c"/><rect x="3" y="5" width="1" height="1" fill="#2b2f3c"/><rect x="4" y="5" width="1" height="1" fill="#2b2f3c"/><rect x="5" y="5" width="1" height="1" fill="#f4f6f8"/><rect x="6" y="5" width="1" height="1" fill="#2b2f3c"/><rect x="0" y="6" width="1" height="1" fill="#2b2f3c" opacity="0.6"/><rect x="1" y="6" width="1" height="1" fill="#2b2f3c"/><rect x="2" y="6" width="1" height="1" fill="#2b2f3c" opacity="0.6"/><rect x="4" y="6" width="1" height="1" fill="#2b2f3c" opacity="0.6"/><rect x="5" y="6" width="1" height="1" fill="#2b2f3c"/><rect x="6" y="6" width="1" height="1" fill="#2b2f3c" opacity="0.6"/></svg>
<!-- Servers tab -->
<div class="a" style="left:150px;top:84px;width:1px;height:19px;background:#8b8f99"></div>
<div class="a" style="left:82px;top:84px;width:1px;height:19px;background:#ffffff"></div>
<div class="a" style="left:151px;top:84px;width:1px;height:19px;background:#ffffff"></div>
<div class="a" style="left:228px;top:84px;width:1px;height:19px;background:#ffffff"></div>
<div class="a" style="left:229px;top:83px;width:1px;height:20px;background:#3c7fb1"></div>
<div class="t tabtxt" id="tServers" style="left:87px;top:89px;letter-spacing:0.32px;">Servers</div>
<!-- minimize btn -->
<div class="a" style="left:214px;top:89px;width:8px;height:7px;border:1px solid #2b2f3c;background:linear-gradient(#ffffff,#ececec)"></div>
<div class="a" style="left:216px;top:94px;width:6px;height:2px;background:#2b2f3c"></div>
<!-- TREE -->
<div id="tree">
<!-- dotted lines -->
<div class="a" style="left:39px;top:122px;width:1px;height:64px;background:repeating-linear-gradient(#9a9a9a 0,#9a9a9a 1px,transparent 1px,transparent 2px)"></div>
<div class="a" style="left:26px;top:113px;width:6px;height:1px;background:repeating-linear-gradient(90deg,#9a9a9a 0,#9a9a9a 1px,transparent 1px,transparent 2px)"></div>
<div class="a" style="left:45px;top:131px;width:6px;height:1px;background:repeating-linear-gradient(90deg,#9a9a9a 0,#9a9a9a 1px,transparent 1px,transparent 2px)"></div>
<div class="a" style="left:45px;top:149px;width:6px;height:1px;background:repeating-linear-gradient(90deg,#9a9a9a 0,#9a9a9a 1px,transparent 1px,transparent 2px)"></div>
<div class="a" style="left:45px;top:167px;width:6px;height:1px;background:repeating-linear-gradient(90deg,#9a9a9a 0,#9a9a9a 1px,transparent 1px,transparent 2px)"></div>
<div class="a" style="left:45px;top:185px;width:6px;height:1px;background:repeating-linear-gradient(90deg,#9a9a9a 0,#9a9a9a 1px,transparent 1px,transparent 2px)"></div>
<!-- expand boxes -->
<div class="a xb" style="left:16px;top:109px;"><b class="h"></b></div>
<div class="a xb" style="left:35px;top:127px;"><b class="h"></b><b class="v"></b></div>
<div class="a xb" style="left:35px;top:145px;"><b class="h"></b><b class="v"></b></div>
<div class="a xb" style="left:35px;top:163px;"><b class="h"></b><b class="v"></b></div>
<div class="a xb" style="left:35px;top:181px;"><b class="h"></b><b class="v"></b></div>
<!-- selection -->
<div class="a" style="left:55px;top:104px;width:79px;height:16px;background:#3399ff;border:1px solid #0a0a0a"></div>
<div class="t" id="trRoot" style="left:56px;top:108px;color:#fff;letter-spacing:-0.1px;">NewProject.bep</div>
<div class="t" id="tr1" style="letter-spacing:-0.25px;left:74px;top:126px;">Sync Points</div>
<div class="t" id="tr2" style="letter-spacing:-0.25px;left:74px;top:144px;">Scripts</div>
<div class="t" id="tr3" style="letter-spacing:-0.25px;left:74px;top:162px;">Mappings</div>
<div class="t" id="tr4" style="letter-spacing:-0.25px;left:74px;top:180px;">Tables</div>
<svg class="a" style="left:32px;top:105px" width="16" height="16" viewBox="0 0 16 16"><path d="M3,1 L5,1 L5.6,3 L6,5 L6.2,7.5 L7,8.8 L8,8 L9,7 L10,7.4 L9.6,8.6 L11,8.6 L14.4,6 L15,6.4 L12,9.2 L9,12 L6.4,14.6 L5.4,15 L4.4,14 L3,13.4 L1.2,12.8 L1,7.4 L2.2,7 L2,4 L2.6,2.6 Z" fill="#e8960c"/><path d="M6.4,14.4 L9.4,11.4 L12.2,8.8 L14.9,6.3" stroke="#bd670c" stroke-width="1" fill="none"/><rect x="8.6" y="8" width="0.9" height="0.9" fill="#fff6e0"/><rect x="9.8" y="9" width="0.8" height="0.8" fill="#fff6e0" opacity="0.8"/></svg>

</div>



<svg class="a" style="left:52px;top:123px" width="16" height="16" viewBox="0 0 16 16"><path d="M0,2 H10 V1 H14 V15 H0 Z" fill="#0b7c0b"/><path d="M10.6,1.6 H13.4 V3" fill="none" stroke="#48b448" stroke-width="0.8"/><rect x="1.7" y="3" width="11.2" height="10.3" fill="#ffffff"/><rect x="1.7" y="3.5" width="8.6" height="0.7" fill="#3fae3f"/><rect x="2.6" y="4.6" width="9.4" height="8" fill="#0b7c0b"/><path d="M4.2,6 h1.6 v1.6 h-1.6z M8.8,6 h1.6 v1.6 h-1.6z M6.6,5.6 h1.4 v2.4 h-1.4z" fill="#f4fbf4"/><path d="M3.8,9.2 v1.8 h2 M10.8,9.2 v1.8 h-2 M6.4,9.6 h2" stroke="#f4fbf4" stroke-width="0.9" fill="none"/><circle cx="7.3" cy="9.4" r="0.7" fill="#58c058"/></svg>
<svg class="a" style="left:52px;top:141px" width="16" height="16" viewBox="0 0 16 16"><path d="M0,2 H10 V1 H14 V15 H0 Z" fill="#0b7c0b"/><path d="M10.6,1.6 H13.4 V3" fill="none" stroke="#48b448" stroke-width="0.8"/><rect x="1.7" y="3" width="11.2" height="10.3" fill="#ffffff"/><rect x="1.7" y="3.5" width="8.6" height="0.7" fill="#3fae3f"/><text x="2.3" y="12" font-family="Liberation Sans" font-weight="bold" font-size="8.6" fill="#1c9a1c" stroke="#0b7c0b" stroke-width="0.55" textLength="9.6" lengthAdjust="spacingAndGlyphs">JS</text></svg>
<svg class="a" style="left:52px;top:159px" width="16" height="16" viewBox="0 0 16 16"><path d="M0,2 H10 V1 H14 V15 H0 Z" fill="#0b7c0b"/><path d="M10.6,1.6 H13.4 V3" fill="none" stroke="#48b448" stroke-width="0.8"/><rect x="1.7" y="3" width="11.2" height="10.3" fill="#ffffff"/><rect x="1.7" y="3.5" width="8.6" height="0.7" fill="#3fae3f"/><rect x="2.6" y="4.6" width="9.4" height="8" fill="#0b7c0b"/><rect x="3.8" y="6.8" width="7" height="4.8" fill="#ffffff"/><path d="M4.4,7.4 h2 v1.4 h-2z M8.2,7.4 h2 v1.4 h-2z M4.4,10 h2 v1.4 h-2z M8.2,10 h2 v1.4 h-2z" fill="#0b7c0b"/><path d="M6,10.6 L8.6,7.8" stroke="#2a9a2a" stroke-width="0.8"/></svg>
<svg class="a" style="left:52px;top:177px" width="16" height="16" viewBox="0 0 16 16"><path d="M0,2 H10 V1 H14 V15 H0 Z" fill="#0b7c0b"/><path d="M10.6,1.6 H13.4 V3" fill="none" stroke="#48b448" stroke-width="0.8"/><rect x="1.7" y="3" width="11.2" height="10.3" fill="#ffffff"/><rect x="1.7" y="3.5" width="8.6" height="0.7" fill="#3fae3f"/><rect x="2.6" y="4.6" width="9.4" height="8" fill="#0b7c0b"/><rect x="3.8" y="6.8" width="7" height="4.8" fill="#ffffff"/><rect x="4.3" y="7.6" width="1.1" height="1.1" fill="#0a5a0a"/><rect x="4.3" y="9.6" width="1.1" height="1.1" fill="#0a5a0a"/><rect x="6.3" y="7.6" width="1.1" height="1.1" fill="#0a5a0a"/><rect x="6.3" y="9.6" width="1.1" height="1.1" fill="#0a5a0a"/><rect x="8.3" y="7.6" width="1.1" height="1.1" fill="#0a5a0a"/><rect x="8.3" y="9.6" width="1.1" height="1.1" fill="#0a5a0a"/></svg>
<!-- CENTER PANEL -->
<div class="a" style="left:234px;top:83px;width:396px;height:501px;border:1px solid #8b8f99;background:#f0f0f0"></div>



<!-- RIGHT PANEL -->
<div class="a" style="left:636px;top:83px;width:301px;height:503px;background:#8b8f99"></div>
<div class="a" style="left:637px;top:84px;width:299px;height:19px;background:linear-gradient(#ffffff 0,#ffffff 1px,#f0f0f0 1px,#e8e8e8 10px,#d6d6d4 10px,#cdcdcb 19px)"></div>
<div class="a" style="left:637px;top:84px;width:179px;height:19px;background:linear-gradient(#ffffff 0,#ffffff 1px,#f8f8f8 1px,#f4f4f4 19px)"></div>
<div class="a" style="left:816px;top:84px;width:1px;height:19px;background:#8b8f99"></div>
<div class="a" style="left:817px;top:84px;width:1px;height:19px;background:#ffffff"></div>
<div class="t tabtxt" id="tProps" style="left:641px;top:89px;letter-spacing:0.335px;">NewProject.bep - Properties</div>
<svg class="a" style="left:804px;top:90px" width="7" height="7" viewBox="0 0 7 7" shape-rendering="crispEdges"><rect x="0" y="0" width="1" height="1" fill="#2b2f3c" opacity="0.6"/><rect x="1" y="0" width="1" height="1" fill="#2b2f3c"/><rect x="2" y="0" width="1" height="1" fill="#2b2f3c" opacity="0.6"/><rect x="4" y="0" width="1" height="1" fill="#2b2f3c" opacity="0.6"/><rect x="5" y="0" width="1" height="1" fill="#2b2f3c"/><rect x="6" y="0" width="1" height="1" fill="#2b2f3c" opacity="0.6"/><rect x="0" y="1" width="1" height="1" fill="#2b2f3c"/><rect x="1" y="1" width="1" height="1" fill="#f4f6f8"/><rect x="2" y="1" width="1" height="1" fill="#2b2f3c"/><rect x="3" y="1" width="1" height="1" fill="#2b2f3c"/><rect x="4" y="1" width="1" height="1" fill="#2b2f3c"/><rect x="5" y="1" width="1" height="1" fill="#f4f6f8"/><rect x="6" y="1" width="1" height="1" fill="#2b2f3c"/><rect x="0" y="2" width="1" height="1" fill="#2b2f3c" opacity="0.6"/><rect x="1" y="2" width="1" height="1" fill="#2b2f3c"/><rect x="2" y="2" width="1" height="1" fill="#f4f6f8"/><rect x="3" y="2" width="1" height="1" fill="#2b2f3c"/><rect x="4" y="2" width="1" height="1" fill="#f4f6f8"/><rect x="5" y="2" width="1" height="1" fill="#2b2f3c"/><rect x="6" y="2" width="1" height="1" fill="#2b2f3c" opacity="0.6"/><rect x="1" y="3" width="1" height="1" fill="#2b2f3c"/><rect x="2" y="3" width="1" height="1" fill="#2b2f3c"/><rect x="3" y="3" width="1" height="1" fill="#f4f6f8"/><rect x="4" y="3" width="1" height="1" fill="#2b2f3c"/><rect x="5" y="3" width="1" height="1" fill="#2b2f3c"/><rect x="0" y="4" width="1" height="1" fill="#2b2f3c" opacity="0.6"/><rect x="1" y="4" width="1" height="1" fill="#2b2f3c"/><rect x="2" y="4" width="1" height="1" fill="#f4f6f8"/><rect x="3" y="4" width="1" height="1" fill="#2b2f3c"/><rect x="4" y="4" width="1" height="1" fill="#f4f6f8"/><rect x="5" y="4" width="1" height="1" fill="#2b2f3c"/><rect x="6" y="4" width="1" height="1" fill="#2b2f3c" opacity="0.6"/><rect x="0" y="5" width="1" height="1" fill="#2b2f3c"/><rect x="1" y="5" width="1" height="1" fill="#f4f6f8"/><rect x="2" y="5" width="1" height="1" fill="#2b2f3c"/><rect x="3" y="5" width="1" height="1" fill="#2b2f3c"/><rect x="4" y="5" width="1" height="1" fill="#2b2f3c"/><rect x="5" y="5" width="1" height="1" fill="#f4f6f8"/><rect x="6" y="5" width="1" height="1" fill="#2b2f3c"/><rect x="0" y="6" width="1" height="1" fill="#2b2f3c" opacity="0.6"/><rect x="1" y="6" width="1" height="1" fill="#2b2f3c"/><rect x="2" y="6" width="1" height="1" fill="#2b2f3c" opacity="0.6"/><rect x="4" y="6" width="1" height="1" fill="#2b2f3c" opacity="0.6"/><rect x="5" y="6" width="1" height="1" fill="#2b2f3c"/><rect x="6" y="6" width="1" height="1" fill="#2b2f3c" opacity="0.6"/></svg>
<div class="a" style="left:921px;top:89px;width:8px;height:7px;border:1px solid #2b2f3c;background:linear-gradient(#ffffff,#ececec)"></div>
<div class="a" style="left:923px;top:94px;width:6px;height:2px;background:#2b2f3c"></div>
<!-- sheet -->
<div class="a" style="left:637px;top:104px;width:299px;height:408px;background:#ffffff"></div>
<div class="a" style="left:637px;top:104px;width:299px;height:18px;background:#d4d4d4"></div>
<div class="a" style="left:637px;top:512px;width:299px;height:4px;background:#f0f0f0"></div>
<div class="a" style="left:637px;top:516px;width:299px;height:1px;background:#8c8c8e"></div>
<div class="a" style="left:637px;top:517px;width:299px;height:68px;background:#f0f0f0"></div>
<div class="a" style="left:786px;top:122px;width:1px;height:162px;background:#d8d8d8"></div>
<div class="prow" style="top:139px"></div>
<div class="pn" id="pn0" style="letter-spacing:-0.8px;top:126px">Name</div>
<div class="pv" id="pv0" style="letter-spacing:-0.12px;top:126px">NewProject</div>
<div class="prow" style="top:157px"></div>
<div class="pn" id="pn1" style="letter-spacing:-0.19px;top:144px">Extension</div>
<div class="pv" id="pv1" style="letter-spacing:-0.4px;top:144px">bep</div>
<div class="eb" style="top:141px"><i style="left:2px"></i><i style="left:5px"></i><i style="left:8px"></i></div>
<div class="prow" style="top:175px"></div>
<div class="pn" id="pn2" style="letter-spacing:-0.18px;top:162px">All Files</div>
<div class="pv" id="pv2" style="letter-spacing:-0.18px;top:162px">C:\Examples\NewProject....</div>
<div class="eb" style="top:159px"><i style="left:2px"></i><i style="left:5px"></i><i style="left:8px"></i></div>
<div class="prow" style="top:193px"></div>
<div class="pn" id="pn3" style="letter-spacing:-0.24px;top:180px">File Size</div>
<div class="pv" id="pv3" style="letter-spacing:-0.4px;top:180px">156</div>
<div class="prow" style="top:211px"></div>
<div class="pn" id="pn4" style="letter-spacing:-0.23px;top:198px">Modification Time</div>
<div class="pv" id="pv4" style="letter-spacing:-0.23px;top:198px">18/06/2013 3:03:51 PM</div>
<div class="prow" style="top:229px"></div>
<div class="pn" id="pn5" style="letter-spacing:0.17px;top:216px">Version</div>
<div class="pv" id="pv5" style="top:216px;color:#000">1.0</div>
<div class="eb" style="top:213px"><i style="left:2px"></i><i style="left:5px"></i><i style="left:8px"></i></div>
<div class="prow" style="top:247px"></div>
<div class="pn" id="pn6" style="letter-spacing:-0.12px;top:234px">Description</div>
<div class="eb" style="top:231px"><i style="left:2px"></i><i style="left:5px"></i><i style="left:8px"></i></div>
<div class="prow" style="top:265px"></div>
<div class="pn" id="pn7" style="letter-spacing:0.1px;top:252px">Author</div>
<div class="eb" style="top:249px"><i style="left:2px"></i><i style="left:5px"></i><i style="left:8px"></i></div>
<div class="prow" style="top:283px"></div>
<div class="pn" id="pn8" style="letter-spacing:0.02px;top:270px">Show Wizard Before Execute</div>
<div class="a" style="left:791px;top:268px;width:11px;height:11px;border:1px solid #8e8f8f;background:linear-gradient(135deg,#d4d9e0,#eeeeee 60%,#f6f6f6);box-shadow:inset 0 0 0 1px #ffffff,inset 0 0 0 2px #c4c8ce"></div>

<div class="t" id="pHdr" style="left:649px;top:108px;letter-spacing:-0.12px;">Properties</div>
<div class="a" style="left:638px;top:108px;width:7px;height:7px;border:1px solid #9a9a9a;background:#fff;border-radius:1px"></div>
<div class="a" style="left:640px;top:112px;width:5px;height:1px;background:#3a4fb0"></div>
<div class="t" id="pDesc" style="left:639px;top:526px;font-weight:bold;font-size:11px;letter-spacing:0.32px;">NewProject.bep</div>
<div class="a" style="left:915px;top:522px;width:15px;height:15px;border-radius:8px;background:#979797"></div>
<div class="t" style="left:919px;top:524px;font-size:12px;font-weight:bold;color:#b9b9b9">?</div>



<!-- BOTTOM -->
<div class="a" style="left:8px;top:610px;width:932px;height:1px;background:#a0a0a0"></div>
<div class="a" style="left:8px;top:611px;width:932px;height:1px;background:#ffffff"></div>

<svg class="a" style="left:10px;top:588px" width="42" height="20" viewBox="10 588 42 20">
<defs><linearGradient id="gWin" x1="0" y1="0" x2="0" y2="1"><stop offset="0" stop-color="#ffffff"/><stop offset="1" stop-color="#dcdcdc"/></linearGradient>
<linearGradient id="gOutW" x1="0" y1="0" x2="1" y2="1"><stop offset="0" stop-color="#dfe5f4"/><stop offset="1" stop-color="#ffffff"/></linearGradient>
<radialGradient id="gBub" cx="0.45" cy="0.4" r="0.7"><stop offset="0" stop-color="#fbeccb"/><stop offset="1" stop-color="#eeb45c"/></radialGradient></defs>
<rect x="16.5" y="593.5" width="7" height="6" fill="url(#gWin)" stroke="#2b2f3c"/><rect x="16" y="593" width="8" height="2" fill="#2b2f3c"/>
<rect x="12.5" y="596.5" width="7" height="6" fill="url(#gWin)" stroke="#2b2f3c"/><rect x="12" y="596" width="8" height="2" fill="#2b2f3c"/>
<rect x="32.5" y="590.5" width="14" height="12" fill="url(#gOutW)" stroke="#7e8c9c"/><rect x="32" y="590" width="15" height="3.6" fill="#7890b2"/><path d="M33,591 h9" stroke="#a4b6cc" stroke-width="0.8"/><path d="M42.6,591.2 l1,1.2 l1,-1.2z M44.8,591.2 l1,1.2 l1,-1.2z" fill="#dfe7f2"/>
<path d="M38.2,595.2 L41.6,597.6 C45,596.8 47.9,598.6 47.9,601 C47.9,603.4 45.4,604.9 42.4,604.9 C39.4,604.9 37.1,603.3 37.1,601 C37.1,599.9 37.8,599 38.8,598.4 Z" fill="url(#gBub)" stroke="#d8820f" stroke-width="0.9" stroke-linejoin="round"/><path d="M40.2,600.6 h4.6" stroke="#e08a18" stroke-width="1.2"/>
</svg>
<div class="t" id="tOut" style="left:51.5px;top:593px;letter-spacing:0.2px;">Output</div>
<div class="a" style="left:853px;top:615px;width:1px;height:14px;background:#a0a0a0"></div>
<div class="a" style="left:914px;top:615px;width:1px;height:14px;background:#a0a0a0"></div>
<div class="t" id="tIns" style="left:918px;top:617px;letter-spacing:-0.4px;">INS</div>



<!-- tooltip -->
<div class="a" style="left:457px;top:86px;width:69px;height:16px;border:1px solid #000;background:#ffffe1"></div>
<div class="t" id="tTip" style="left:462px;top:90px;font-size:12px;transform-origin:0 0;transform:scaleX(0.9);">Execute (F6)</div>
<!-- cursor -->
<svg class="a" style="left:450px;top:67px" width="16" height="24" viewBox="0 0 16 24"><path d="M2.5,2.2 L2.5,18.4 L6.3,14.9 L8.9,20.9 L11.2,19.9 L8.7,14 L13.6,14 Z" fill="#ffffff" stroke="#1c1c28" stroke-width="1" stroke-linejoin="miter"/></svg>

</body>
</html>
